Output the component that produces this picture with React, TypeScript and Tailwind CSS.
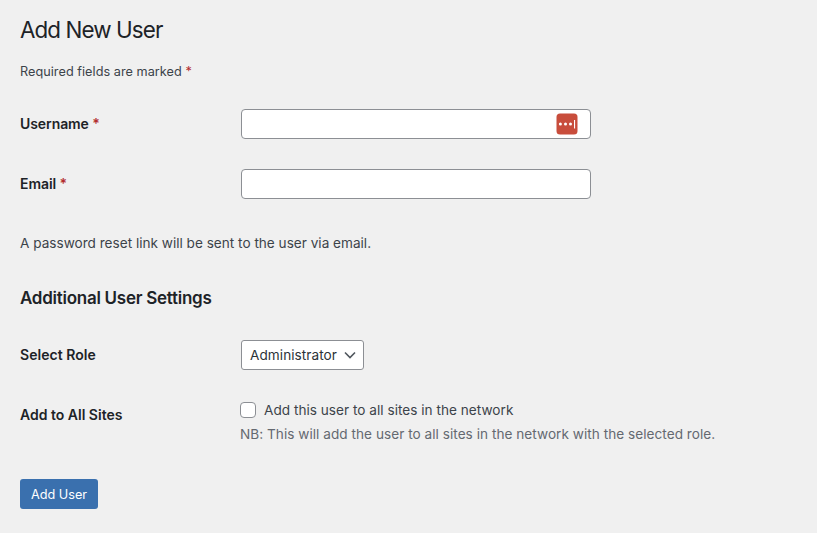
import type { ReactNode } from "react";

function Star() {
  return <span className="text-[#b32d2e]"> *</span>;
}

function Label({ children }: { children: ReactNode }) {
  return (
    <div className="w-[221px] shrink-0 text-[14px] leading-[18px] font-semibold text-[#1d2327]">{children}</div>
  );
}

export default function App() {
  return (
    <main className="h-[533px] w-[817px] overflow-hidden bg-[#f0f0f0] px-5 pt-[15px] font-['Inter','Liberation_Sans',sans-serif] text-[13.6px] text-[#3c434a]">
      <h1 className="h-[30px] text-[22.4px] leading-[30px] tracking-[-0.9px] text-[#1d2327]">Add New User</h1>
      <p className="mt-[17px] h-5 text-[12.7px] leading-5 tracking-[0.03px]">Required fields are marked<Star /></p>
      <div className="mt-[27px] flex h-[30px] items-center">
        <Label><span className="tracking-[-0.08px]">Username<Star /></span></Label>
        <div className="flex h-[30px] w-[350px] items-center justify-end rounded-[4px] border border-[#8c8f94] bg-white pr-3">
          <svg width="22" height="22" viewBox="0 0 22 22">
            <rect x="0.5" y="0.5" width="21" height="21" rx="3.5" fill="#c84d3c" />
            <g fill="#fff">
              <circle cx="4.4" cy="11" r="1.5" />
              <circle cx="9.5" cy="11" r="1.5" />
              <circle cx="14.5" cy="11" r="1.5" />
              <rect x="18" y="7" width="1.1" height="8.5" />
            </g>
          </svg>
        </div>
      </div>
      <div className="mt-[30px] flex h-[30px] items-center">
        <Label><span className="tracking-[-0.08px]">Email<Star /></span></Label>
        <div className="h-[30px] w-[350px] rounded-[4px] border border-[#8c8f94] bg-white" />
      </div>
      <p className="mt-[34px] h-5 leading-5">A password reset link will be sent to the user via email.</p>
      <h2 className="mt-[33px] h-6 text-[17px] leading-6 font-semibold tracking-[-0.26px] text-[#1d2327]">Additional User Settings</h2>
      <div className="mt-[30px] flex h-[30px] items-center">
        <Label><span className="tracking-[0.03px]">Select Role</span></Label>
        <div className="flex h-[30px] w-[123px] items-center justify-between rounded-[3px] border border-[#8c8f94] bg-white pr-[7px] pl-2 text-[#2c3338]">
          <span className="leading-5 tracking-[0.06px]">Administrator</span>
          <svg width="12" height="12" viewBox="0 0 12 12" fill="none" stroke="#50575e" strokeWidth="1.6">
            <path d="M1 3.5 6 8.5 11 3.5" />
          </svg>
        </div>
      </div>
      <div className="mt-[30px] flex h-[50px]">
        <Label><span className="block pt-[6px]">Add to All Sites</span></Label>
        <div className="-ml-px">
          <div className="flex h-5 items-center gap-2">
            <span className="size-4 rounded-[4px] border border-[#8c8f94] bg-white" />
            <span className="leading-5 tracking-[0.02px]">Add this user to all sites in the network</span>
          </div>
          <p className="mt-1 h-5 leading-5 tracking-[0.035px] whitespace-nowrap text-[#646970]">NB: This will add the user to all sites in the network with the selected role.</p>
        </div>
      </div>
      <button className="mt-[29px] block h-[30px] w-[78px] rounded-[3px] bg-[#3a70ae] pt-px text-[12.7px] leading-[28px] text-white">Add User</button>
    </main>
  );
}
